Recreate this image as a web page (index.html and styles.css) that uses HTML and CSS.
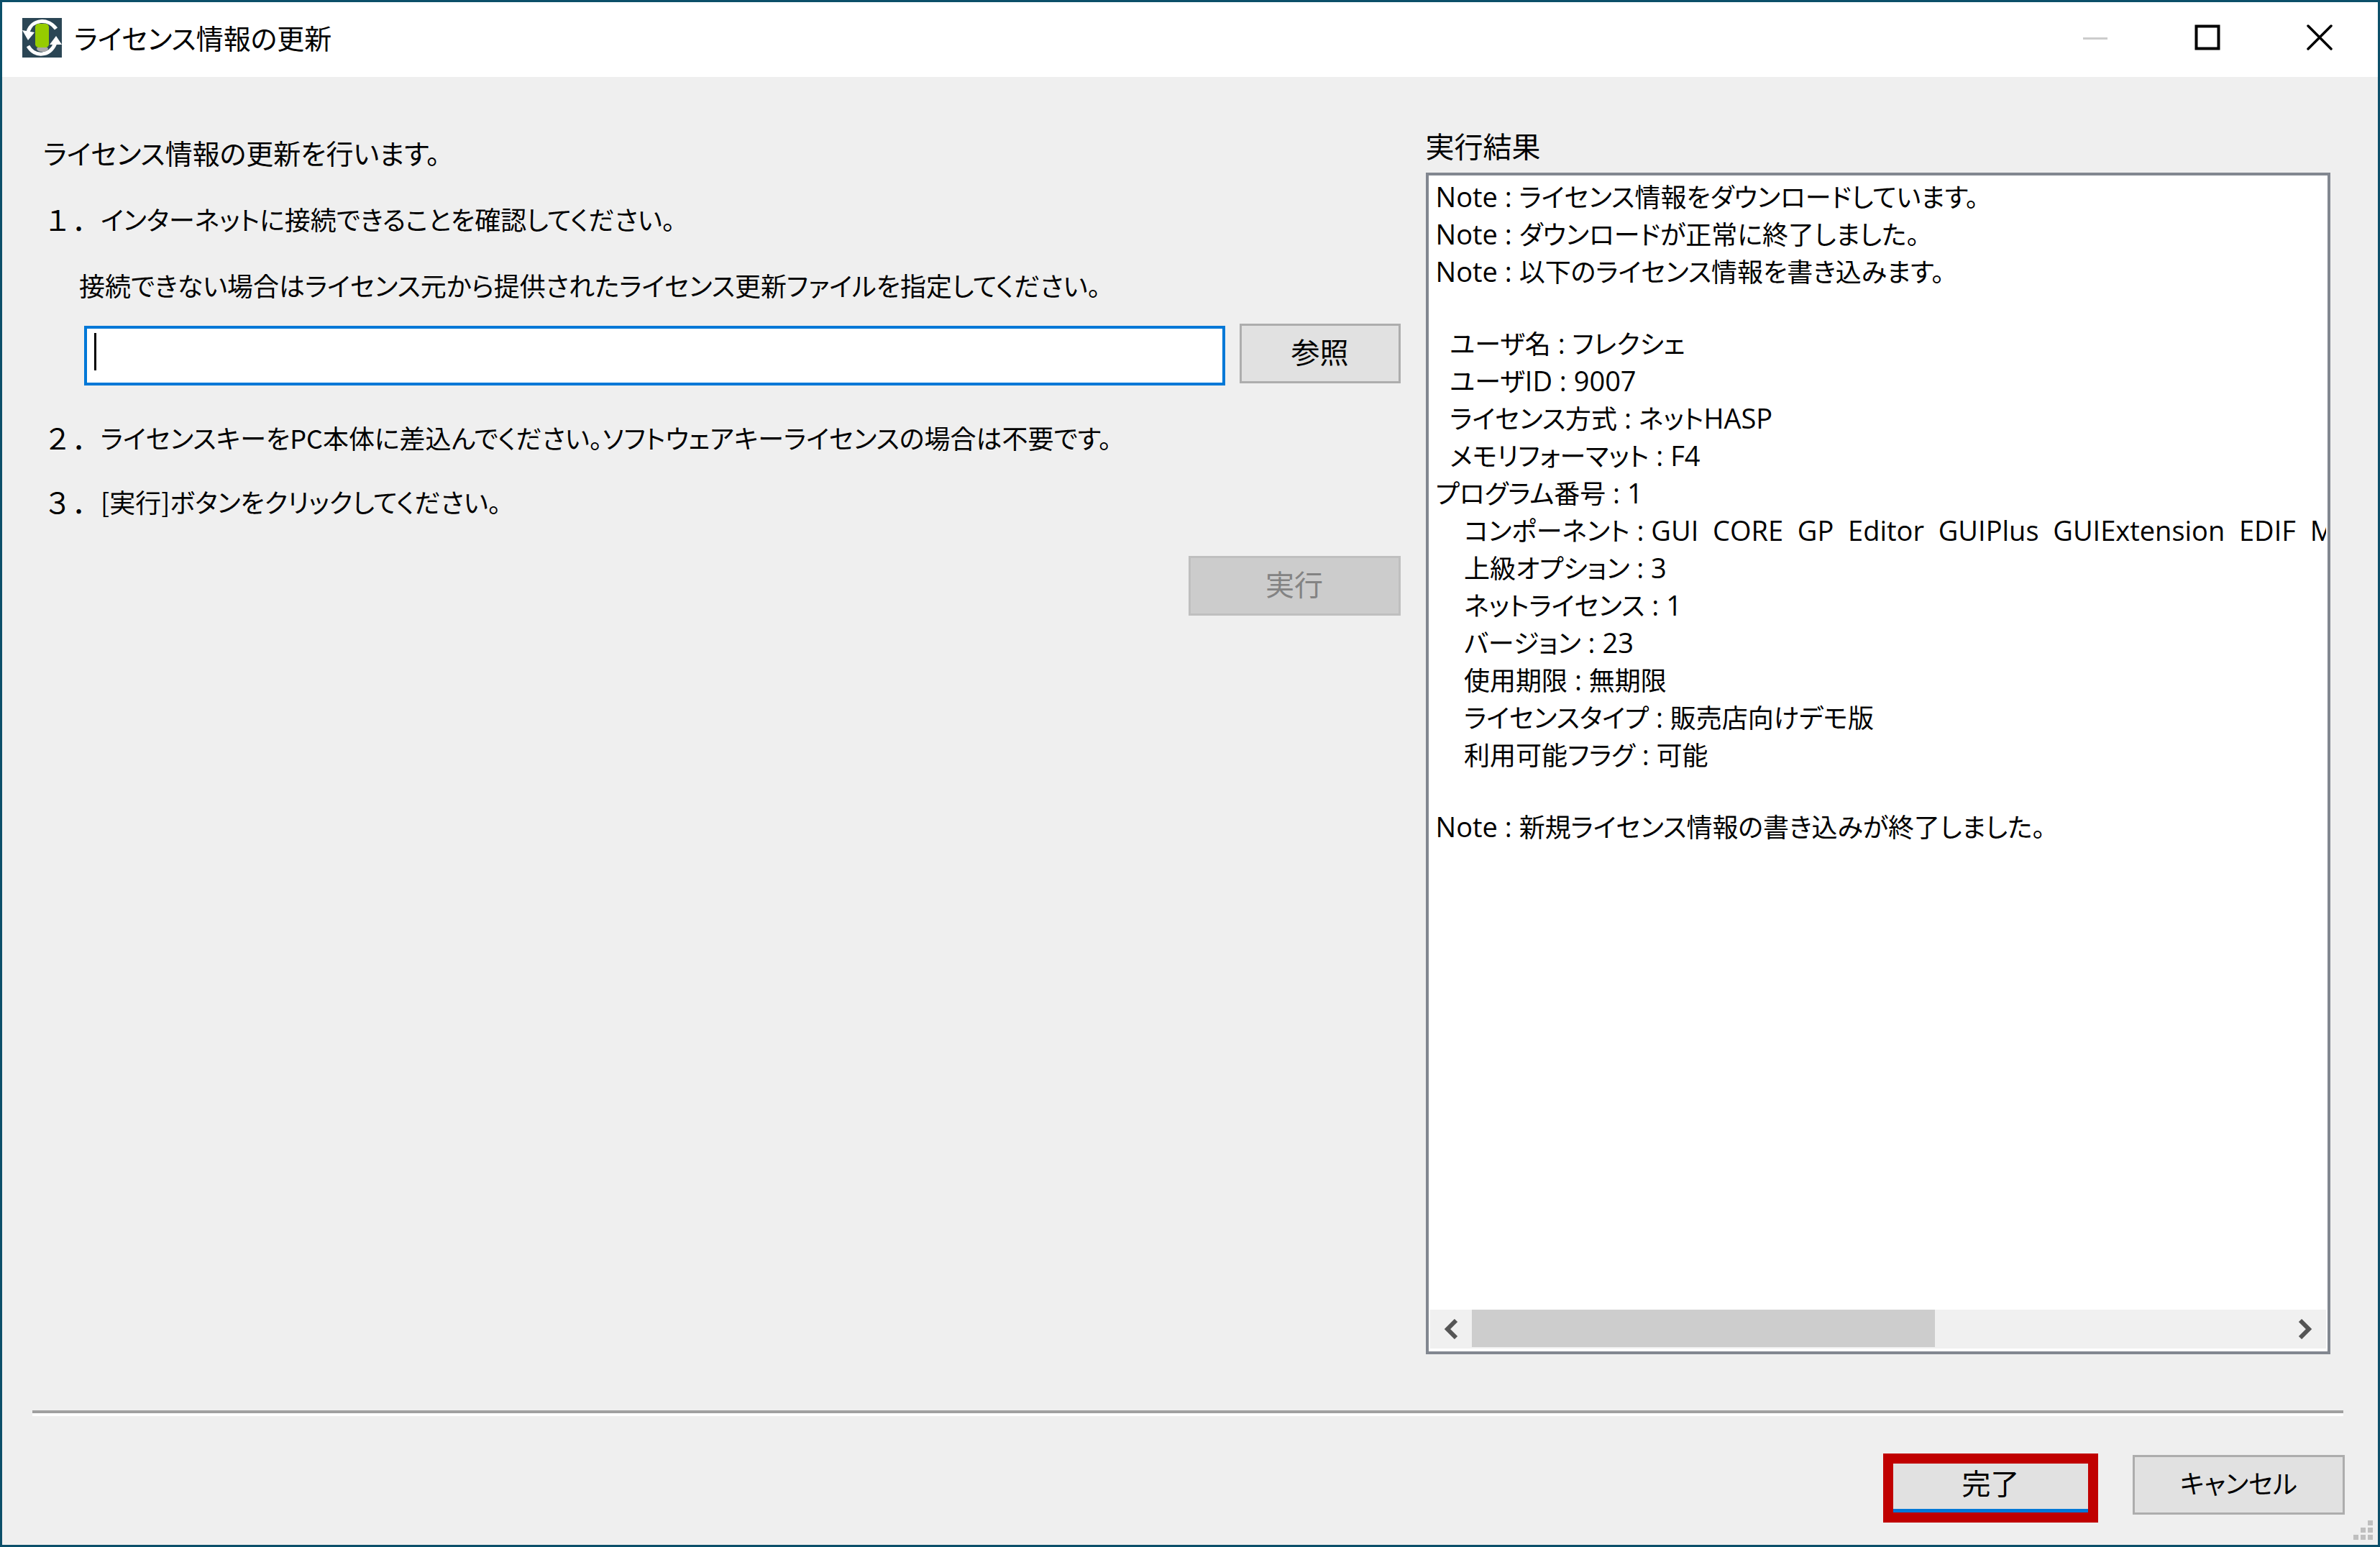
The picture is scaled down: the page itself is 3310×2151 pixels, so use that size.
FILE: index.html
```html
<!DOCTYPE html>
<html lang="ja">
  <head>
    <meta charset="UTF-8" />
    <meta name="viewport" content="width=device-width, initial-scale=1.0" />
    <title>ライセンス情報の更新</title>
    <link rel="stylesheet" href="styles.css">
  </head>
  <body>
    <div class="window">
      <header class="titlebar">
        <svg class="app-icon" viewBox="0 0 55 55" aria-hidden="true">
          <rect width="55" height="55" fill="#2b4655" />
          <path d="M8 19 C14 1 36 0 47 15" fill="none" stroke="#fff" stroke-width="5" />
          <path d="M0 17 L17 20 L8 31 Z" fill="#fff" />
          <path d="M8 39 C17 55 38 54 46 35" fill="none" stroke="#fff" stroke-width="5" />
          <path d="M38 37 L47 25 L55 37 Z" fill="#fff" />
          <ellipse cx="28" cy="43" rx="8" ry="4" fill="#a9a9a9" />
          <path d="M18 12 Q19 8 23 8 H32 Q36 8 37 12 V37 Q36 41 32 41 H23 Q19 41 18 37 Z" fill="#96cc00" />
        </svg>
        <h1>ライセンス情報の更新</h1>
        <div class="window-buttons">
          <button class="btn-window" aria-label="最小化" disabled>
            <svg viewBox="0 0 36 36"><path d="M1 19.5 H35" stroke="#ccc" stroke-width="3" /></svg>
          </button>
          <button class="btn-window" aria-label="最大化">
            <svg viewBox="0 0 36 36"><rect x="2.5" y="2.5" width="31" height="31" fill="none" stroke="#000" stroke-width="4" /></svg>
          </button>
          <button class="btn-window" aria-label="閉じる">
            <svg viewBox="0 0 36 36"><path d="M2 2 L34 34 M34 2 L2 34" stroke="#000" stroke-width="3.5" stroke-linecap="round" /></svg>
          </button>
        </div>
      </header>

      <main class="content">
        <section class="steps">
          <p class="intro">ライセンス情報の更新を行います。</p>
          <div class="step">
            <span class="step-number">１．</span>
            <span>インターネットに接続できることを確認してください。</span>
          </div>
          <label class="file-label" for="license-file">接続できない場合はライセンス元から提供されたライセンス更新ファイルを指定してください。</label>
          <div class="file-row">
            <div class="file-field">
              <input type="text" id="license-file" />
            </div>
            <button class="btn btn-browse">参照</button>
          </div>
          <div class="step">
            <span class="step-number">２．</span>
            <span>ライセンスキーをPC本体に差込んでください。ソフトウェアキーライセンスの場合は不要です。</span>
          </div>
          <div class="step step-last">
            <span class="step-number">３．</span>
            <span>[実行]ボタンをクリックしてください。</span>
          </div>
          <button class="btn btn-run" disabled>実行</button>
        </section>

        <section class="result">
          <h2>実行結果</h2>
          <div class="result-box">
            <div class="log">
<pre>
<b>Note : </b>ライセンス情報をダウンロードしています。
<b>Note : </b>ダウンロードが正常に終了しました。
<b>Note : </b>以下のライセンス情報を書き込みます。
</pre>
<pre>
<b>  </b>ユーザ名<b> : </b>フレクシェ
<b>  </b>ユーザ<b>ID : 9007</b>
<b>  </b>ライセンス方式<b> : </b>ネット<b>HASP</b>
<b>  </b>メモリフォーマット<b> : F4</b>
プログラム番号<b> : 1</b>
<b>    </b>コンポーネント<b> : GUI  CORE  GP  Editor  GUIPlus  GUIExtension  EDIF  M</b>
<b>    </b>上級オプション<b> : 3</b>
<b>    </b>ネットライセンス<b> : 1</b>
<b>    </b>バージョン<b> : 23</b>
<b>    </b>使用期限<b> : </b>無期限
<b>    </b>ライセンスタイプ<b> : </b>販売店向けデモ版
<b>    </b>利用可能フラグ<b> : </b>可能
</pre>
<pre>
<b>Note : </b>新規ライセンス情報の書き込みが終了しました。
</pre>
            </div>
            <div class="scrollbar">
              <button class="scroll-arrow" aria-label="左へスクロール">
                <svg viewBox="0 0 22 28"><path d="M18 2 L6 14 L18 26" fill="none" stroke="#555" stroke-width="6" /></svg>
              </button>
              <div class="scroll-track"><div class="scroll-thumb"></div></div>
              <button class="scroll-arrow" aria-label="右へスクロール">
                <svg viewBox="0 0 22 28"><path d="M4 2 L16 14 L4 26" fill="none" stroke="#555" stroke-width="6" /></svg>
              </button>
            </div>
          </div>
        </section>
      </main>

      <footer class="footer">
        <button class="btn btn-finish">完了</button>
        <button class="btn btn-cancel">キャンセル</button>
        <svg class="grip" viewBox="0 0 28 28" aria-hidden="true">
          <path d="M20 0h7v7h-7z M10 10h7v7h-7z M20 10h7v7h-7z M0 20h7v7h-7z M10 20h7v7h-7z M20 20h7v7h-7z" fill="#bfbfbf" />
        </svg>
      </footer>
    </div>
  </body>
</html>
```

FILE: styles.css
```css
* {
  box-sizing: border-box;
}
body {
  margin: 0;
  font-family: "Noto Sans CJK JP", sans-serif;
  font-size: 36px;
  line-height: 52px;
  font-feature-settings: "palt";
  color: #000;
}
h1,
h2,
p,
pre {
  margin: 0;
  font: inherit;
}
button,
input {
  font: inherit;
  font-feature-settings: inherit;
  color: inherit;
}
.window {
  display: flex;
  flex-direction: column;
  min-height: 100vh;
  background-color: #efefef;
  border: 3px solid #0b4f69;
}

/* title bar */
.titlebar {
  display: flex;
  align-items: center;
  height: 104px;
  padding: 0 3px 6px 28px;
  background-color: white;
}
.titlebar h1,
.intro {
  font-size: 38px;
}
.app-icon {
  width: 55px;
  height: 55px;
  margin-right: 17px;
}
.window-buttons {
  display: flex;
  margin-left: auto;
}
.btn-window {
  display: flex;
  align-items: center;
  justify-content: center;
  width: 156px;
  height: 98px;
  padding: 0;
  background: none;
  border: none;
}
.btn-window svg {
  width: 36px;
  height: 36px;
}

/* main area */
.content {
  flex: 1;
  display: grid;
  grid-template-columns: 3fr 2fr;
  column-gap: 35px;
  padding: 69px 66px 78px 57px;
}
.steps {
  display: flex;
  flex-direction: column;
  min-width: 0;
  padding-top: 10px;
}
.intro {
  margin-bottom: 40px;
}
.step {
  display: flex;
}
.step-number {
  width: 80px;
  font-size: 40px;
  font-feature-settings: normal;
}
.file-label {
  margin-top: 40px;
  padding-left: 50px;
}
.file-row {
  display: flex;
  align-items: flex-start;
  gap: 20px;
  margin: 28px 0 46px;
  padding-left: 57px;
}
.file-field {
  position: relative;
  flex: 1;
  margin-top: 3px;
}
.file-field input {
  display: block;
  width: 100%;
  height: 83px;
  padding: 0 10px;
  background-color: white;
  border: 4px solid #0078d7;
  outline: none;
}
/* text cursor */
.file-field::after {
  content: "";
  position: absolute;
  top: 10px;
  left: 14px;
  width: 3px;
  height: 52px;
  background-color: black;
}
.step-last {
  margin: 37px 0 50px;
}
.btn {
  width: 295px;
  height: 83px;
  padding: 0 0 8px;
  font-size: 40px;
  background-color: #e1e1e1;
  border: 3px solid #adadad;
}
.btn-browse {
  width: 224px;
}
.btn-run {
  align-self: flex-end;
  color: #838383;
  background-color: #ccc;
  border-color: #bfbfbf;
}
.btn-cancel {
  font-size: 36px;
}

/* result log */
.result {
  display: flex;
  flex-direction: column;
  min-width: 0;
}
.result h2 {
  margin-bottom: 12px;
  font-size: 40px;
}
.result-box {
  flex: 1;
  display: flex;
  flex-direction: column;
  padding: 2px 2px 4px;
  background-color: white;
  border: 4px solid #828790;
}
.log {
  flex: 1;
  display: flex;
  flex-direction: column;
  gap: 48px;
  padding-left: 8px;
  overflow: hidden;
}
.log b {
  font-family: "Open Sans", sans-serif;
  font-size: 38px;
  font-weight: normal;
  line-height: 1;
}
.scrollbar {
  display: flex;
  height: 54px;
  background-color: #f0f0f0;
}
.scroll-arrow {
  display: flex;
  align-items: center;
  justify-content: center;
  width: 58px;
  padding: 0;
  background: none;
  border: none;
}
.scroll-arrow svg {
  width: 22px;
  height: 28px;
}
.scroll-track {
  flex: 1;
}
.scroll-thumb {
  width: 57%;
  height: 52px;
  background-color: #cdcdcd;
}

/* bottom buttons */
.footer {
  position: relative;
  display: flex;
  justify-content: flex-end;
  gap: 50px;
  padding: 62px 46px 42px;
}
.footer::before {
  content: "";
  position: absolute;
  top: 0;
  left: 42px;
  right: 48px;
  border-top: 4px solid #a0a0a0;
  border-bottom: 4px solid white;
}
.btn-finish {
  position: relative;
  border: 8px solid #0078d7;
}
.btn-finish::after {
  content: "";
  position: absolute;
  top: -10px;
  right: -10px;
  bottom: -19px;
  left: -10px;
  border: 14px solid #c00000;
}
.grip {
  position: absolute;
  right: 6px;
  bottom: 6px;
  width: 28px;
  height: 28px;
}
```
